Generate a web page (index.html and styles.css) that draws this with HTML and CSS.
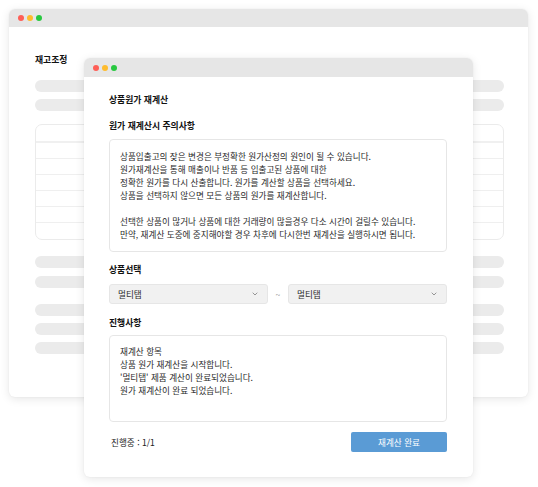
FILE: index.html
```html
<!DOCTYPE html>
<html lang="ko">
<head>
<meta charset="utf-8">
<title>상품원가 재계산</title>
<link rel="stylesheet" href="styles.css">
</head>
<body>
<div class="desktop">
  <div class="window back">
    <div class="titlebar">
      <span class="dot red"></span><span class="dot yellow"></span><span class="dot green"></span>
    </div>
    <div class="back-content">
      <div class="back-title">재고조정</div>
      <div class="bar-group">
        <div class="bar"></div>
        <div class="bar"></div>
      </div>
      <div class="table">
        <div class="thead"></div>
        <div class="trow"></div>
        <div class="trow"></div>
        <div class="trow"></div>
        <div class="trow"></div>
        <div class="trow"></div>
        <div class="trow last"></div>
      </div>
      <div class="bar-group g16">
        <div class="bar"></div>
        <div class="bar"></div>
      </div>
      <div class="bar-group g15">
        <div class="bar"></div>
        <div class="bar"></div>
        <div class="bar"></div>
      </div>
    </div>
  </div>

  <div class="window front">
    <div class="titlebar">
      <span class="dot red"></span><span class="dot yellow"></span><span class="dot green"></span>
    </div>
    <div class="front-content">
      <h1 class="heading">상품원가 재계산</h1>
      <h2 class="heading sub">원가 재계산시 주의사항</h2>
      <div class="box notice">
        <p>상품입출고의 잦은 변경은 부정확한 원가산정의 원인이 될 수 있습니다.<br>
        원가재계산을 통해 매출이나 반품 등 입출고된 상품에 대한<br>
        정확한 원가를 다시 산출합니다. 원가를 계산할 상품을 선택하세요.<br>
        상품을 선택하지 않으면 모든 상품의 원가를 재계산합니다.</p>
        <p>선택한 상품이 많거나 상품에 대한 거래량이 많을경우 다소 시간이 걸릴수 있습니다.<br>
        만약, 재계산 도중에 중지해야할 경우 차후에 다시한번 재계산을 실행하시면 됩니다.</p>
      </div>
      <h2 class="heading sec">상품선택</h2>
      <div class="select-row">
        <div class="select"><span>멀티탭</span>
          <svg class="chev" viewBox="0 0 6 4" width="6" height="4"><path d="M0.7 0.7 L3 3 L5.3 0.7" fill="none" stroke="#8a8a8a" stroke-width="0.9"/></svg>
        </div>
        <span class="tilde">~</span>
        <div class="select"><span>멀티탭</span>
          <svg class="chev" viewBox="0 0 6 4" width="6" height="4"><path d="M0.7 0.7 L3 3 L5.3 0.7" fill="none" stroke="#8a8a8a" stroke-width="0.9"/></svg>
        </div>
      </div>
      <h2 class="heading sec2">진행사항</h2>
      <div class="box progress">
        <p>재계산 항목<br>
        상품 원가 재계산을 시작합니다.<br>
        '멀티탭' 제품 계산이 완료되었습니다.<br>
        원가 재계산이 완료 되었습니다.</p>
      </div>
      <div class="footer">
        <span class="status">진행중 : 1/1</span>
        <button class="btn">재계산 완료</button>
      </div>
    </div>
  </div>
</div>
</body>
</html>
```

FILE: styles.css
```css
* { box-sizing: border-box; }
html, body { margin: 0; padding: 0; background: #ffffff; }
body {
  font-family: "Noto Sans CJK KR", "Noto Sans", sans-serif;
  color: #2a2a2a;
}
.desktop {
  position: relative;
  width: 538px;
  height: 487px;
  overflow: hidden;
}
.window {
  position: absolute;
  background: #ffffff;
  border-radius: 6px;
  overflow: hidden;
  box-shadow: 0 2px 10px rgba(0, 0, 0, 0.10), 0 0 2px rgba(0, 0, 0, 0.05);
  display: flex;
  flex-direction: column;
}
.back { left: 9px; top: 9px; width: 519px; height: 388px; }
.front { left: 84px; top: 58px; width: 389px; height: 419px; }

.titlebar {
  background: #e6e6e6;
  height: 18px;
  display: flex;
  align-items: center;
  gap: 3px;
  padding-left: 9px;
  flex-shrink: 0;
}
.front .titlebar { height: 19px; padding-left: 9px; }
.dot { width: 6px; height: 6px; border-radius: 50%; display: block; }
.red { background: #fe5f57; }
.yellow { background: #febc2e; }
.green { background: #28c840; }

/* back window */
.back-content {
  padding: 27px 24px 0 26px;
  display: flex;
  flex-direction: column;
}
.back-title {
  font-size: 8.8px;
  font-weight: 700;
  line-height: 12px;
  color: #111;
  margin-bottom: 14px;
}
.bar-group { display: flex; flex-direction: column; gap: 7px; }
.bar { height: 12px; border-radius: 6px; background: #ebebeb; }
.table {
  margin-top: 13px;
  border: 1px solid #ebebeb;
  border-radius: 7px;
  height: 116px;
  display: flex;
  flex-direction: column;
}
.thead { height: 18px; border-bottom: 2px solid #f0f0f0; }
.trow { height: 16px; border-bottom: 1px solid #efefef; }
.trow.last { border-bottom: none; flex: 1; }
.g16 { margin-top: 16px; gap: 8px; }
.g15 { margin-top: 16px; gap: 7px; }

/* front window */
.front-content {
  padding: 17px 26px 0 25px;
  display: flex;
  flex-direction: column;
}
.heading {
  margin: 0;
  font-size: 8.8px;
  font-weight: 700;
  line-height: 12px;
  color: #111;
}
.sub { margin-top: 14px; }
.sec { margin-top: 12px; }
.sec2 { margin-top: 13px; }
.box {
  border: 1px solid #e6e6e6;
  border-radius: 4px;
  font-size: 8.6px;
  line-height: 13px;
  color: #2a2a2a;
  padding: 10px 10px 0 10px;
}
.box p { margin: 0; }
.notice { margin-top: 7px; height: 113px; }
.notice p + p { margin-top: 13px; }
.progress { margin-top: 6px; height: 87px; padding-top: 9px; }

.select-row {
  margin-top: 8px;
  display: flex;
  align-items: center;
}
.select {
  flex: 1;
  height: 20px;
  background: #f1f1f1;
  border: 1px solid #e6e6e6;
  border-radius: 3px;
  display: flex;
  align-items: center;
  justify-content: space-between;
  padding: 0 9px 0 8px;
  font-size: 8.6px;
  color: #2a2a2a;
}
.tilde {
  width: 20px;
  text-align: center;
  font-size: 8.6px;
  color: #666;
}
.chev { display: block; }

.footer {
  margin-top: 10px;
  display: flex;
  justify-content: space-between;
  align-items: center;
}
.status { font-size: 8.6px; color: #222; padding-left: 2px; }
.btn {
  width: 96px;
  height: 20px;
  border: none;
  border-radius: 2px;
  background: #5a9bd5;
  color: #ffffff;
  font-family: inherit;
  font-size: 8.6px;
  padding: 0;
}
```
